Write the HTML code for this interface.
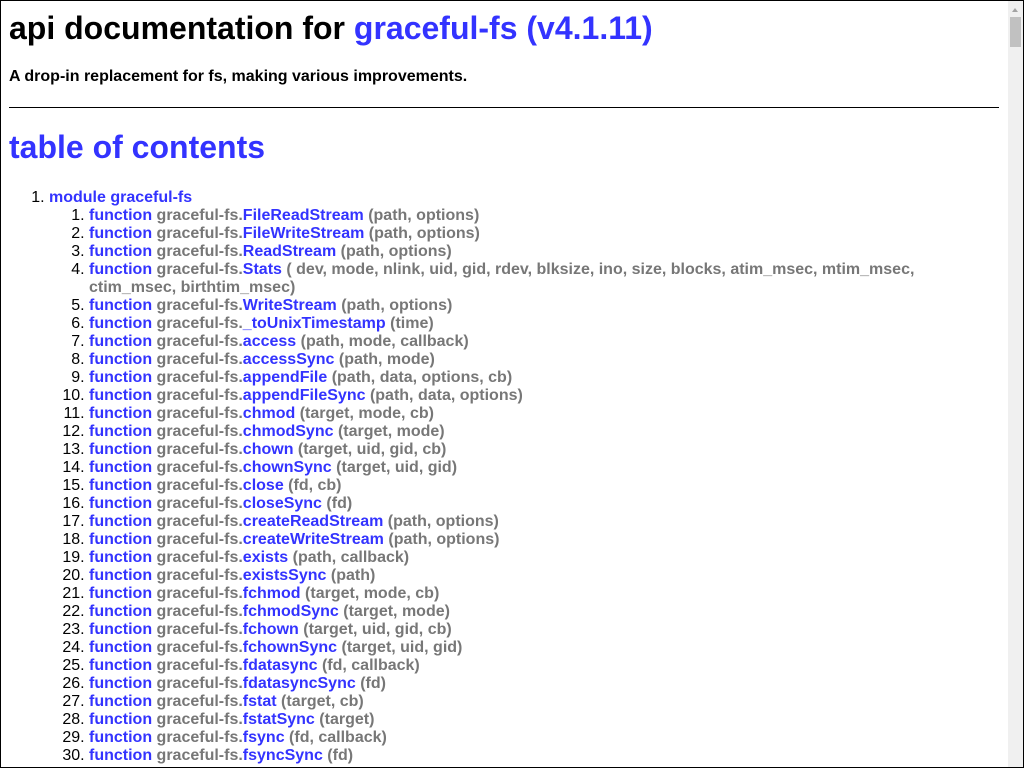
<!DOCTYPE html>
<html><head><meta charset="utf-8"><style>
html,body{margin:0;padding:0;}
body{width:1024px;height:768px;overflow:hidden;font-family:"Liberation Sans",sans-serif;}
#frame{position:absolute;left:0;top:0;width:1022px;height:766px;border:1px solid #000;overflow:hidden;background:#fff;}
#sb{position:absolute;right:0;top:0;width:15px;height:766px;background:#f0f0f0;}
#sb .up{position:absolute;left:4px;top:7px;width:0;height:0;border-left:3.5px solid transparent;border-right:3.5px solid transparent;border-bottom:4px solid #a3a3a3;}
#sb .th{position:absolute;left:2px;top:16px;width:11px;height:30px;background:#c1c1c1;}
#c{position:absolute;left:8px;top:9px;width:990px;}
h1{margin:0;font-size:32px;font-weight:bold;line-height:37px;color:#000;}
a,.b{color:#33f;text-decoration:none;}
.sub{margin:21px 0 0;font-size:16px;font-weight:bold;line-height:18px;}
hr{margin:21px 0 0;border:0;border-top:1px solid #000;height:0;}
h2{margin:21px 0 0;font-size:32px;line-height:37px;color:#33f;}
ol{margin:23px 0 0;padding-left:40px;font-size:16px;line-height:18px;font-weight:bold;}
ol ol{margin:0;padding-left:40px;}
li{color:#000;}
.g{color:#777;}
li li::marker{font-weight:normal;}
ol>li::marker{font-weight:normal;}
</style></head><body><div id="frame">
<div id="c">
<h1>api documentation for <a>graceful-fs (v4.1.11)</a></h1>
<div class="sub">A drop-in replacement for fs, making various improvements.</div>
<hr>
<h2>table of contents</h2>
<ol><li><span class="b">module graceful-fs</span>
<ol>
<li><span class="b">function</span> <span class="g">graceful-fs.</span><span class="b">FileReadStream</span> <span class="g">(path, options)</span></li>
<li><span class="b">function</span> <span class="g">graceful-fs.</span><span class="b">FileWriteStream</span> <span class="g">(path, options)</span></li>
<li><span class="b">function</span> <span class="g">graceful-fs.</span><span class="b">ReadStream</span> <span class="g">(path, options)</span></li>
<li><span class="b">function</span> <span class="g">graceful-fs.</span><span class="b">Stats</span> <span class="g">( dev, mode, nlink, uid, gid, rdev, blksize, ino, size, blocks, atim_msec, mtim_msec, ctim_msec, birthtim_msec)</span></li>
<li><span class="b">function</span> <span class="g">graceful-fs.</span><span class="b">WriteStream</span> <span class="g">(path, options)</span></li>
<li><span class="b">function</span> <span class="g">graceful-fs.</span><span class="b">_toUnixTimestamp</span> <span class="g">(time)</span></li>
<li><span class="b">function</span> <span class="g">graceful-fs.</span><span class="b">access</span> <span class="g">(path, mode, callback)</span></li>
<li><span class="b">function</span> <span class="g">graceful-fs.</span><span class="b">accessSync</span> <span class="g">(path, mode)</span></li>
<li><span class="b">function</span> <span class="g">graceful-fs.</span><span class="b">appendFile</span> <span class="g">(path, data, options, cb)</span></li>
<li><span class="b">function</span> <span class="g">graceful-fs.</span><span class="b">appendFileSync</span> <span class="g">(path, data, options)</span></li>
<li><span class="b">function</span> <span class="g">graceful-fs.</span><span class="b">chmod</span> <span class="g">(target, mode, cb)</span></li>
<li><span class="b">function</span> <span class="g">graceful-fs.</span><span class="b">chmodSync</span> <span class="g">(target, mode)</span></li>
<li><span class="b">function</span> <span class="g">graceful-fs.</span><span class="b">chown</span> <span class="g">(target, uid, gid, cb)</span></li>
<li><span class="b">function</span> <span class="g">graceful-fs.</span><span class="b">chownSync</span> <span class="g">(target, uid, gid)</span></li>
<li><span class="b">function</span> <span class="g">graceful-fs.</span><span class="b">close</span> <span class="g">(fd, cb)</span></li>
<li><span class="b">function</span> <span class="g">graceful-fs.</span><span class="b">closeSync</span> <span class="g">(fd)</span></li>
<li><span class="b">function</span> <span class="g">graceful-fs.</span><span class="b">createReadStream</span> <span class="g">(path, options)</span></li>
<li><span class="b">function</span> <span class="g">graceful-fs.</span><span class="b">createWriteStream</span> <span class="g">(path, options)</span></li>
<li><span class="b">function</span> <span class="g">graceful-fs.</span><span class="b">exists</span> <span class="g">(path, callback)</span></li>
<li><span class="b">function</span> <span class="g">graceful-fs.</span><span class="b">existsSync</span> <span class="g">(path)</span></li>
<li><span class="b">function</span> <span class="g">graceful-fs.</span><span class="b">fchmod</span> <span class="g">(target, mode, cb)</span></li>
<li><span class="b">function</span> <span class="g">graceful-fs.</span><span class="b">fchmodSync</span> <span class="g">(target, mode)</span></li>
<li><span class="b">function</span> <span class="g">graceful-fs.</span><span class="b">fchown</span> <span class="g">(target, uid, gid, cb)</span></li>
<li><span class="b">function</span> <span class="g">graceful-fs.</span><span class="b">fchownSync</span> <span class="g">(target, uid, gid)</span></li>
<li><span class="b">function</span> <span class="g">graceful-fs.</span><span class="b">fdatasync</span> <span class="g">(fd, callback)</span></li>
<li><span class="b">function</span> <span class="g">graceful-fs.</span><span class="b">fdatasyncSync</span> <span class="g">(fd)</span></li>
<li><span class="b">function</span> <span class="g">graceful-fs.</span><span class="b">fstat</span> <span class="g">(target, cb)</span></li>
<li><span class="b">function</span> <span class="g">graceful-fs.</span><span class="b">fstatSync</span> <span class="g">(target)</span></li>
<li><span class="b">function</span> <span class="g">graceful-fs.</span><span class="b">fsync</span> <span class="g">(fd, callback)</span></li>
<li><span class="b">function</span> <span class="g">graceful-fs.</span><span class="b">fsyncSync</span> <span class="g">(fd)</span></li>
</ol></li></ol>
</div>
<div id="sb"><div class="up"></div><div class="th"></div></div>
</div></body></html>
